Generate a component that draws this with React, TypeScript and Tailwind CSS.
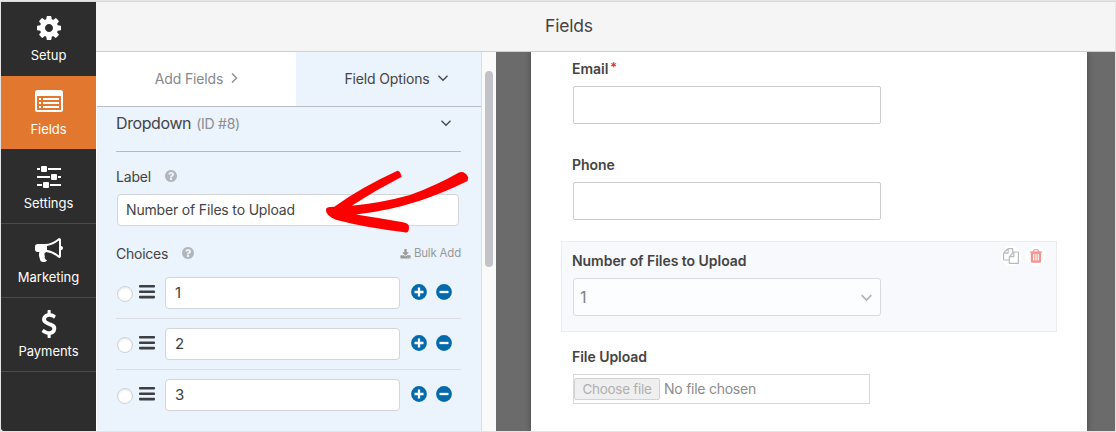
import React from "react";

const paths = {
  cog: "M1152 896q0-106-75-181t-181-75-181 75-75 181 75 181 181 75 181-75 75-181zm512-109v222q0 12-8 23t-20 13l-185 28q-19 54-39 91 35 50 107 138 10 12 10 25t-9 23q-27 37-99 108t-94 71q-12 0-26-9l-138-108q-44 23-91 38-16 136-29 186-7 28-36 28h-222q-14 0-24.5-8.5t-11.5-21.5l-28-184q-49-16-90-37l-141 107q-10 9-25 9-14 0-25-11-126-114-165-168-7-10-7-23 0-12 8-23 15-21 51-66.5t54-70.5q-27-50-41-99l-183-27q-13-2-21-12.5t-8-23.5v-222q0-12 8-23t19-13l186-28q14-46 39-92-40-57-107-138-10-12-10-24 0-10 9-23 26-36 98.5-107.5t94.5-71.5q13 0 26 10l138 107q44-23 91-38 16-136 29-186 7-28 36-28h222q14 0 24.5 8.5t11.5 21.5l28 184q49 16 90 37l142-107q9-9 24-9 13 0 25 10 129 119 165 170 7 8 7 22 0 12-8 23-15 21-51 66.5t-54 70.5q26 50 41 98l183 28q13 2 21 12.5t8 23.5z",
  bullhorn: "M1664 640q53 0 90.5 37.5t37.5 90.5-37.5 90.5-90.5 37.5v384q0 52-38 90t-90 38q-417-347-812-380-58 19-91 66t-31 100.5 40 92.5q-20 33-23 65.5t6 58 33.5 55 48 50 61.5 50.5q-29 58-111.5 83t-168.5 11.5-132-55.5q-7-23-29.5-87.5t-32-94.5-23-89-15-101 3.5-98.5 22-110.5h-122q-66 0-113-47t-47-113v-192q0-66 47-113t113-47h480q435 0 896-384 52 0 90 38t38 90v384zm-128 604v-954q-394 302-768 343v270q377 42 768 341z",
  dollar: "M1362 1185q0 153-99.5 263.5t-258.5 136.5v175q0 14-9 23t-23 9h-135q-13 0-22.5-9.5t-9.5-22.5v-175q-66-9-127.5-31t-101.5-44.5-74-48-46.5-37.5-17.5-18q-17-21-2-41l103-135q7-10 23-12 15-2 24 9l2 2q113 99 243 125 37 8 74 8 81 0 142.5-43t61.5-122q0-28-15-53t-33.5-42-58.5-37.5-66-32-80-32.5q-39-16-61.5-25t-61.5-26.5-62.5-31-56.5-35.5-53.5-42.5-43.5-49-35.5-58-21-66.5-8.5-78q0-138 98-242t255-134v-180q0-13 9.5-22.5t22.5-9.5h135q14 0 23 9t9 23v176q57 6 110.5 23t87 33.5 63.5 37.5 39 29 15 14q17 18 5 38l-81 146q-8 15-23 16-14 3-27-7-3-3-14.5-12t-39-26.5-58.5-32-74.5-26-85.5-11.5q-95 0-155 43t-60 111q0 26 8.5 48t29.5 41.5 39.5 33 56 31 60.5 27 70 27.5q53 20 81 31.5t76 35 75.5 42.5 62 50 53 63.5 31.5 76.5 13 94z",
  question: "M1024 1376v-192q0-14-9-23t-23-9h-192q-14 0-23 9t-9 23v192q0 14 9 23t23 9h192q14 0 23-9t9-23zm256-672q0-88-55.5-163t-138.5-116-170-41q-243 0-371 213-15 24 8 42l132 100q7 6 19 6 16 0 25-12 53-68 86-92 34-24 86-24 48 0 85.5 26t37.5 59q0 38-20 61t-68 45q-63 28-115.5 86.5t-52.5 125.5v36q0 14 9 23t23 9h192q14 0 23-9t9-23q0-19 21.5-49.5t54.5-49.5q32-18 49-28.5t46-35 44.5-48 28-60.5 12.5-81zm384 192q0 209-103 385.5t-279.5 279.5-385.5 103-385.5-103-279.5-279.5-103-385.5 103-385.5 279.5-279.5 385.5-103 385.5 103 279.5 279.5 103 385.5z",
  download: "M1344 1344q0-26-19-45t-45-19-45 19-19 45 19 45 45 19 45-19 19-45zm256 0q0-26-19-45t-45-19-45 19-19 45 19 45 45 19 45-19 19-45zm128-224v320q0 40-28 68t-68 28h-1472q-40 0-68-28t-28-68v-320q0-40 28-68t68-28h465l135 136q58 56 136 56t136-56l136-136h464q40 0 68 28t28 68zm-325-569q17 41-14 70l-448 448q-18 19-45 19t-45-19l-448-448q-31-29-14-70 17-39 59-39h256v-448q0-26 19-45t45-19h256q26 0 45 19t19 45v448h256q42 0 59 39z",
  files: "M1696 384q40 0 68 28t28 68v1216q0 40-28 68t-68 28h-960q-40 0-68-28t-28-68v-288h-544q-40 0-68-28t-28-68v-672q0-40 20-88t48-76l408-408q28-28 76-48t88-20h416q40 0 68 28t28 68v328q68-40 128-40h416zm-544 213l-299 299h299v-299zm-640-384l-299 299h299v-299zm196 647l316-316v-416h-384v416q0 40-28 68t-68 28h-416v640h512v-256q0-40 20-88t48-76zm956 804v-1152h-384v416q0 40-28 68t-68 28h-416v640h896z",
  trash: "M704 1376v-704q0-14-9-23t-23-9h-64q-14 0-23 9t-9 23v704q0 14 9 23t23 9h64q14 0 23-9t9-23zm256 0v-704q0-14-9-23t-23-9h-64q-14 0-23 9t-9 23v704q0 14 9 23t23 9h64q14 0 23-9t9-23zm256 0v-704q0-14-9-23t-23-9h-64q-14 0-23 9t-9 23v704q0 14 9 23t23 9h64q14 0 23-9t9-23zm-544-992h448l-48-117q-7-9-17-11h-317q-10 2-17 11zm928 32v64q0 14-9 23t-23 9h-96v948q0 83-47 143.5t-113 60.5h-832q-66 0-113-58.5t-47-141.5v-952h-96q-14 0-23-9t-9-23v-64q0-14 9-23t23-9h309l70-167q15-37 54-63t79-26h320q40 0 79 26t54 63l70 167h309q14 0 23 9t9 23z",
};

function Glyph({ name, className }: { name: keyof typeof paths; className: string }) {
  return (
    <svg viewBox="0 0 1792 1792" fill="currentColor" className={className}>
      <path d={paths[name]} />
    </svg>
  );
}

function ListIcon() {
  return (
    <svg viewBox="0 0 28 22" className="mt-[-2px] h-[22px] w-[28px]">
      <rect x="0" y="0" width="28" height="22" rx="2.5" fill="#fff" />
      <rect x="2" y="6" width="24" height="14" rx="0.5" fill="#e27730" />
      <g fill="#fff">
        <rect x="4" y="8" width="2" height="2" />
        <rect x="4" y="12" width="2" height="2" />
        <rect x="4" y="16" width="2" height="2" />
        <rect x="8" y="8" width="16" height="2" />
        <rect x="8" y="12" width="16" height="2" />
        <rect x="8" y="16" width="16" height="2" />
      </g>
    </svg>
  );
}

function SlidersIcon() {
  return (
    <svg viewBox="0 0 24 22" fill="#fff" className="mt-[4px] h-[22px] w-[24px]">
      <path d="M0 2h3v2H0zM11 2h13v2H11zM0 10h13v2H0zM21 10h3v2h-3zM0 18h5v2H0zM13 18h11v2H13z" />
      <rect x="4" y="0" width="6" height="6" rx="1" />
      <rect x="14" y="8" width="6" height="6" rx="1" />
      <rect x="6" y="16" width="6" height="6" rx="1" />
    </svg>
  );
}

function Chevron({ className, d }: { className: string; d: string }) {
  return (
    <svg viewBox="0 0 12 12" fill="none" stroke="currentColor" className={className}>
      <path d={d} />
    </svg>
  );
}

const DOWN = "M1.5 3.8 6 8.3l4.5-4.5";
const RIGHT = "M4 1.5 8.5 6 4 10.5";

function CircleButton({ plus }: { plus?: boolean }) {
  return (
    <svg viewBox="0 0 16 16" className="size-4">
      <circle cx="8" cy="8" r="7.9" fill="#036aab" />
      <path d={plus ? "M3.5 8h9M8 3.5v9" : "M3.5 8h9"} stroke="#fff" strokeWidth="2.3" />
    </svg>
  );
}

const nav = [
  { label: "Setup", icon: <Glyph name="cog" className="size-[28px]" />, style: "h-[74px]", gap: "mt-[3px]" },
  { label: "Fields", icon: <ListIcon />, style: "h-[73px] bg-[#e27730]", gap: "mt-[3px]" },
  { label: "Settings", icon: <SlidersIcon />, style: "h-[75px] border-b border-[#4b4b4b]", gap: "mt-[4px]" },
  { label: "Marketing", icon: <Glyph name="bullhorn" className="size-[28px]" />, style: "h-[74px] border-b border-[#4b4b4b]", gap: "mt-[3px]" },
  { label: "Payments", icon: <Glyph name="dollar" className="size-[28px]" />, style: "h-[74px] border-b border-[#4b4b4b]", gap: "mt-[3px]" },
];

function Sidebar() {
  return (
    <nav className="w-[95px] shrink-0 rounded-bl-[3px] bg-[#2d2d2d] text-white">
      {nav.map((n) => (
        <div key={n.label} className={`flex flex-col items-center pt-[12px] ${n.style}`}>
          <div className="flex h-7 items-center">{n.icon}</div>
          <div className={`text-[13px] leading-5 tracking-[-0.04px] ${n.gap}`}>{n.label}</div>
        </div>
      ))}
    </nav>
  );
}

function Choice({ value }: { value: string }) {
  return (
    <div className="flex h-[51px] items-center border-b border-[#d9dce0] last:border-transparent">
      <span className="mt-[1px] ml-[1px] size-4 rounded-full border border-[#cfd1d4] bg-white shadow-[inset_0_1px_2px_rgba(0,0,0,0.1)]" />
      <svg viewBox="0 0 16 14" className="mt-[-3px] ml-[6px] h-[14px] w-4" fill="#3c3f43">
        <rect y="0" width="16" height="2.6" rx="0.8" />
        <rect y="5.4" width="16" height="2.6" rx="0.8" />
        <rect y="10.8" width="16" height="2.6" rx="0.8" />
      </svg>
      <div className="ml-[10px] flex h-8 w-[235px] items-center rounded-[4px] border border-[#d3d5d8] bg-white px-[9px] text-[15px] text-[#3c3f43]">
        {value}
      </div>
      <div className="mt-[-3px] ml-[11px] flex gap-[9px]">
        <CircleButton plus />
        <CircleButton />
      </div>
    </div>
  );
}

function OptionsPanel() {
  return (
    <section className="w-[386px] shrink-0 border-r border-l border-r-[#d9dfe6] border-l-white bg-[#ebf3fc] text-[#444]">
      <div className="flex h-[55px] border-b border-[#b9bdc2] text-[14px] tracking-[-0.14px]">
        <div className="flex w-[199px] items-center justify-center gap-[6px] bg-white pb-[2px] pl-[2px] text-[#86898c]">
          <span>Add Fields</span>
          <Chevron d={RIGHT} className="ml-[-1px] size-3 stroke-[1.3]" />
        </div>
        <div className="flex flex-1 items-center justify-center gap-[7px] pb-[2px] pl-[16px]">
          <span>Field Options</span>
          <Chevron d={DOWN} className="size-3 stroke-[1.3]" />
        </div>
      </div>
      <div className="pr-[20px] pl-[19px]">
        <div className="flex h-[45px] items-center border-b border-[#b6babf] pb-[12px]">
          <span className="text-[16px] tracking-[-0.4px]">Dropdown</span>
          <span className="ml-[5px] text-[14px] tracking-[-0.25px] text-[#8a8d91]">(ID #8)</span>
          <Chevron d={DOWN} className="mr-[9px] ml-auto size-3 stroke-[1.3]" />
        </div>
        <div className="mt-[14px] flex h-5 items-center text-[14px] tracking-[-0.2px]">
          <span>Label</span>
          <Glyph name="question" className="ml-[13px] size-[14px] text-[#b2b6bb]" />
        </div>
        <div className="mt-[8px] ml-[1px] flex h-8 w-[342px] items-center rounded-[4px] border border-[#d3d5d8] bg-white px-[8px] pb-[1px] text-[14px] tracking-[-0.17px]">
          Number of Files to Upload
        </div>
        <div className="mt-[17px] flex h-5 items-center text-[14px] tracking-[-0.25px]">
          <span>Choices</span>
          <Glyph name="question" className="ml-[13px] size-[14px] text-[#b2b6bb]" />
          <span className="ml-auto flex items-center gap-[3px] pt-[2px] text-[11.5px] tracking-[-0.2px] text-[#999]">
            <Glyph name="download" className="size-[11px]" />
            <span>Bulk Add</span>
          </span>
        </div>
        <div className="mt-[5px]">
          <Choice value="1" />
          <Choice value="2" />
          <Choice value="3" />
        </div>
      </div>
    </section>
  );
}

function Preview() {
  return (
    <main className="flex min-w-0 flex-1 overflow-hidden bg-[#6b6b6b] pl-[35px]">
      <div className="w-[556px] shrink-0 bg-white pt-[7px] pl-[30px] text-[14px] font-semibold tracking-[-0.04px] text-[#444] shadow-[0_0_6px_rgba(0,0,0,0.35)]">
        <div className="h-[96px] pl-[11px]">
          <div className="mt-[-1px] flex h-5 items-center gap-[2px]">
            <span>Email</span>
            <span className="text-[13px] font-medium text-[#e02b20]">*</span>
          </div>
          <div className="mt-[8px] ml-[1px] h-[38px] w-[308px] rounded-[2px] border border-[#ccc]" />
        </div>
        <div className="h-[87px] pl-[11px]">
          <div className="flex h-5 items-center">Phone</div>
          <div className="mt-[8px] ml-[1px] h-[38px] w-[308px] rounded-[2px] border border-[#ccc]" />
        </div>
        <div className="flex h-[91px] w-[496px] items-start justify-between border border-[#eaedf0] bg-[#f7f9fd] pt-[8px] pr-[10px] pl-[10px]">
          <div>
            <div className="flex h-5 items-center">Number of Files to Upload</div>
            <div className="mt-[8px] ml-[1px] flex h-[38px] w-[308px] items-center justify-between rounded-[3px] border border-[#d8dadd] bg-[#fcfdfe] pr-[7px] pl-[6px] text-[16px] font-normal text-[#808285]">
              <span>1</span>
              <Chevron d={DOWN} className="size-[13px] stroke-[1.5] text-[#b0b2b5]" />
            </div>
          </div>
          <div className="mt-[-4px] flex gap-[5px]">
            <span className="flex size-5 items-center justify-center rounded-full bg-white text-[#b9b9b9]">
              <Glyph name="files" className="size-4" />
            </span>
            <span className="flex size-5 items-center justify-center rounded-full bg-white text-[#f09590]">
              <Glyph name="trash" className="size-4" />
            </span>
          </div>
        </div>
        <div className="mt-[14px] pl-[11px]">
          <div className="flex h-5 items-center">File Upload</div>
          <div className="mt-[8px] ml-[1px] flex h-[30px] w-[297px] items-center border border-[#d8d8d8] font-normal tracking-[-0.25px] text-[#8c8c8c]">
            <span className="flex h-[22px] w-[86px] items-center justify-center rounded-[2px] border border-[#d2d2d2] bg-[#efefef] text-[13.5px] tracking-[-0.28px] text-[#b0b0b0]">
              Choose file
            </span>
            <span className="ml-[4px] pb-[1px]">No file chosen</span>
          </div>
        </div>
      </div>
    </main>
  );
}

export default function App() {
  return (
    <div className="relative flex h-[432px] w-[1116px] overflow-hidden border border-[#e4e4e4] bg-white font-['Inter',sans-serif]">
      <div className="flex w-full border-t border-[#d9d9d9]">
        <Sidebar />
        <div className="flex min-w-0 flex-1 flex-col">
          <header className="flex h-[50px] shrink-0 items-center border-b border-[#cfcfcf] bg-[#f5f5f5] pb-[1px] pl-[449px] text-[17.5px] tracking-[-0.2px] text-[#444]">
            Fields
          </header>
          <div className="flex min-h-0 flex-1">
            <OptionsPanel />
            <div className="flex w-[14px] shrink-0 justify-center bg-[#fafafa] pt-[19px]">
              <div className="h-[196px] w-2 rounded-full bg-[#c1c3c6]" />
            </div>
            <Preview />
          </div>
        </div>
      </div>
      <svg viewBox="320 165 155 72" className="absolute top-[164px] left-[319px] h-[72px] w-[155px]" fill="#fd0000">
        <path d="M397.5 170.8 Q400 170.5 401.8 176.8 Q376 190 351.7 205.7 Q381 203 410 195 Q437 185 459 172.4 Q465 170.5 468.3 177.5 L467.5 181 Q443 193 419 201 Q388 211 356 214.5 Q379 218 403 222.3 Q409 223.5 409 227 Q409 232 406.5 232.5 Q365 227.5 336.7 220 Q325 215.500 326 209 Q327 206.500 334.300 206.700 Q362 187 397.500 170.800Z" />
      </svg>
    </div>
  );
}
